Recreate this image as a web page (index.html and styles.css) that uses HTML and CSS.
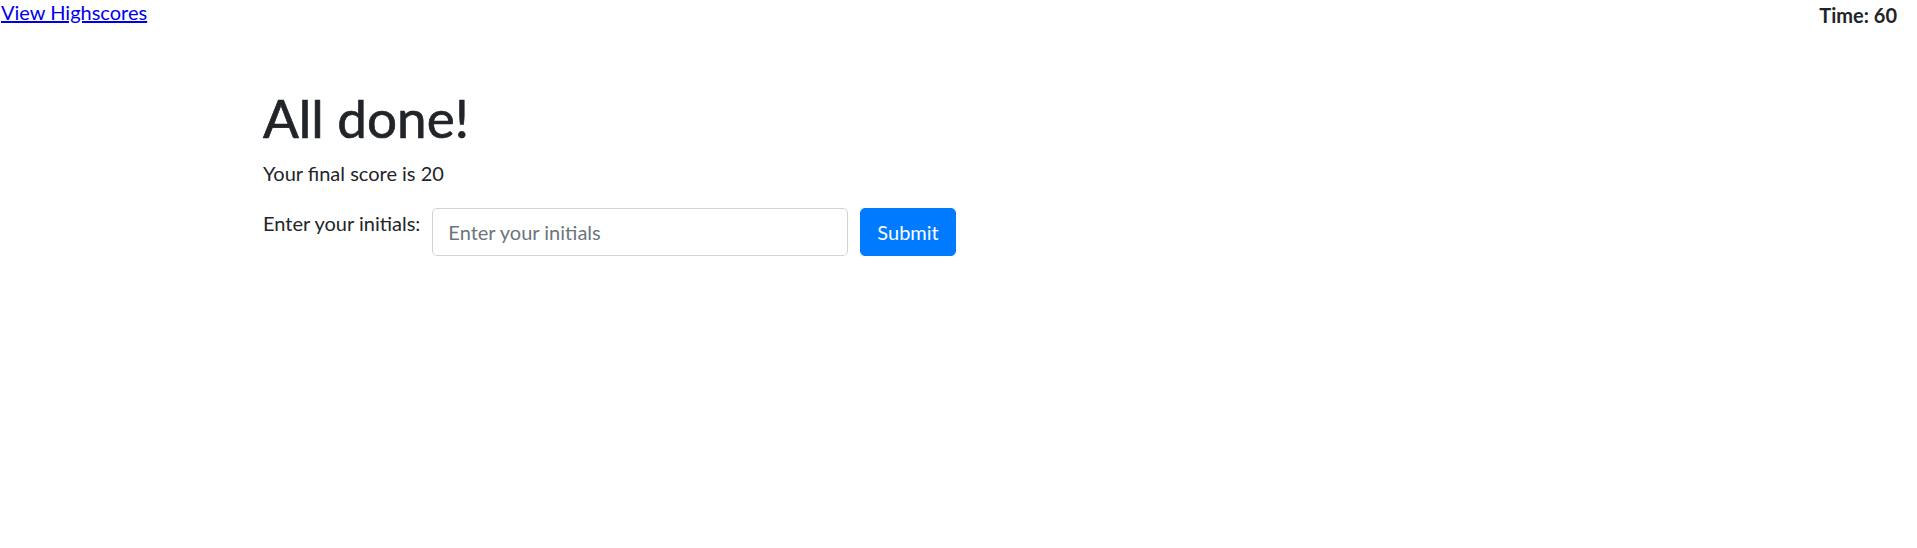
FILE: index.html
```html
<!DOCTYPE html>
<html lang="en">
<head>
<meta charset="utf-8">
<title>Code Quiz</title>
<link rel="stylesheet" href="styles.css">
</head>
<body>
<header class="topbar">
  <a class="highscores-link" href="#">View Highscores</a>
  <div class="timer">Time: 60</div>
</header>
<main class="container">
  <h1 class="title">All done!</h1>
  <p class="score">Your final score is 20</p>
  <form class="initials-form">
    <label class="initials-label" for="initials">Enter your initials:</label>
    <input class="initials-input" id="initials" type="text" placeholder="Enter your initials">
    <button class="submit-btn" type="submit">Submit</button>
  </form>
</main>
</body>
</html>
```
FILE: styles.css
```css
html, body {
  margin: 0;
  padding: 0;
  background: #fff;
}
body {
  font-family: Lato, "Liberation Sans", sans-serif;
  font-size: 20px;
  color: #212529;
}
.topbar {
  display: flex;
  justify-content: space-between;
  align-items: flex-start;
  height: 30px;
  padding: 0 20px 0 1px;
}
.highscores-link {
  color: #0000ee;
  text-decoration: underline;
  line-height: 24px;
}
.timer {
  font-weight: 700;
  line-height: 30px;
}
.container {
  max-width: 1425px;
  margin: 0 auto;
  padding: 56px 18.75px 0 17px;
  box-sizing: border-box;
}
.title {
  margin: 0 0 8px;
  font-size: 53px;
  font-weight: 400;
  line-height: 64px;
  color: #212529;
  -webkit-text-stroke: 0.7px #212529;
}
.score {
  margin: 0 0 20px;
  line-height: 30px;
}
.initials-form {
  display: flex;
  align-items: flex-start;
}
.initials-label {
  line-height: 30px;
  margin-right: 12px;
}
.initials-input {
  width: 416px;
  height: 48px;
  box-sizing: border-box;
  border: 1px solid #ced4da;
  border-radius: 5px;
  padding: 0 15px;
  font-family: inherit;
  font-size: 20px;
  color: #495057;
  margin-right: 12px;
}
.initials-input::placeholder {
  color: #6c757d;
}
.submit-btn {
  height: 48px;
  box-sizing: border-box;
  border: 1px solid #007bff;
  border-radius: 5px;
  background: #007bff;
  color: #fff;
  font-family: inherit;
  font-size: 20px;
  padding: 0 16px;
}
```
